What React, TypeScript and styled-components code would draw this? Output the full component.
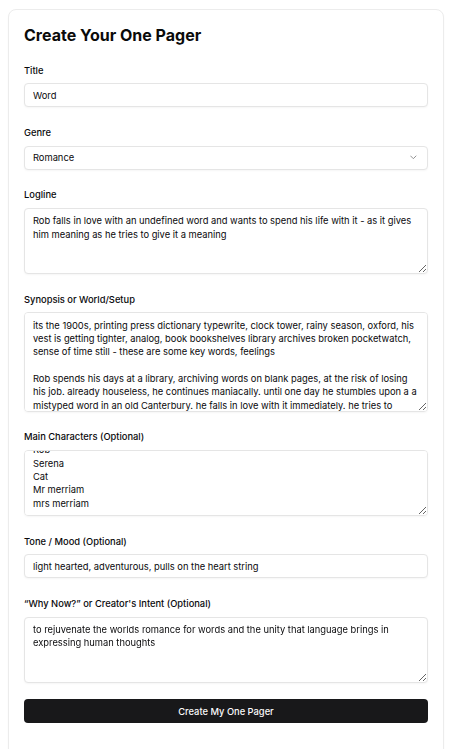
import React, { useEffect, useRef } from "react";
import styled, { createGlobalStyle } from "styled-components";
import { ChevronDown } from "lucide-react";

const Global = createGlobalStyle`
  html, body { margin: 0; padding: 0; background: #ffffff; }
  body {
    font-family: Inter, "Noto Sans", "Liberation Sans", sans-serif;
    color: #0a0a0a;
    -webkit-font-smoothing: antialiased;
  }
  * { box-sizing: border-box; }
`;

const Page = styled.div`
  padding: 9px 11px 0 8px;
`;

const Card = styled.div`
  width: 436px;
  border: 1px solid #ececec;
  border-radius: 8px;
  background: #ffffff;
  box-shadow: 0 1px 2px rgba(0, 0, 0, 0.03);
  padding: 15px 15px 48px 15px;
`;

const Heading = styled.h1`
  margin: 0 0 17.5px 0;
  font-size: 16px;
  line-height: 21.33px;
  font-weight: 700;
  color: #0a0a0a;
`;

const Form = styled.form`
  display: flex;
  flex-direction: column;
  gap: 18.67px;
`;

const Field = styled.div`
  display: flex;
  flex-direction: column;
  gap: 6.33px;
`;

const Label = styled.label`
  font-size: 9.33px;
  line-height: 13.33px;
  font-weight: 500;
  color: #09090b;
`;

const Input = styled.input`
  height: 24px;
  width: 100%;
  border: 1px solid #e5e5e5;
  border-radius: 4px;
  padding: 0 8px;
  font-family: inherit;
  font-size: 9.33px;
  color: #09090b;
  background: #ffffff;
  box-shadow: 0 1px 2px rgba(0, 0, 0, 0.04);
  outline: none;
`;

const SelectButton = styled.button`
  height: 24px;
  width: 100%;
  border: 1px solid #e5e5e5;
  border-radius: 4px;
  padding: 0 8px;
  display: flex;
  align-items: center;
  justify-content: space-between;
  font-family: inherit;
  font-size: 9.33px;
  color: #09090b;
  background: #ffffff;
  box-shadow: 0 1px 2px rgba(0, 0, 0, 0.04);
  cursor: pointer;
  svg { opacity: 0.5; }
`;

const TextArea = styled.textarea<{ $h: number }>`
  height: ${(p) => p.$h}px;
  width: 100%;
  border: 1px solid #e5e5e5;
  border-radius: 4px;
  padding: 5.33px 8px;
  font-family: inherit;
  font-size: 9.33px;
  line-height: 13.33px;
  color: #09090b;
  background: #ffffff;
  box-shadow: 0 1px 2px rgba(0, 0, 0, 0.04);
  outline: none;
  resize: vertical;
  display: block;
  scrollbar-width: none;
`;

const Submit = styled.button`
  margin-top: 16.33px;
  width: 100%;
  height: 24px;
  border: none;
  border-radius: 4px;
  background: #18181a;
  color: #fafafa;
  font-family: inherit;
  font-size: 9.33px;
  font-weight: 500;
  cursor: pointer;
`;

const synopsis =
  "its the 1900s, printing press dictionary typewrite, clock tower, rainy season, oxford, his vest is getting tighter, analog, book bookshelves library archives broken pocketwatch, sense of time still - these are some key words, feelings\n\nRob spends his days at a library, archiving words on blank pages, at the risk of losing his job. already houseless, he continues maniacally. until one day he stumbles upon a a mistyped word in an old Canterbury. he falls in love with it immediately. he tries to understand its meaning in every dictionary he can find, but the word has none.";

export default function App() {
  const charsRef = useRef<HTMLTextAreaElement>(null);
  useEffect(() => {
    if (charsRef.current) charsRef.current.scrollTop = charsRef.current.scrollHeight;
  }, []);

  return (
    <Page>
      <Global />
      <Card>
        <Heading>Create Your One Pager</Heading>
        <Form onSubmit={(e) => e.preventDefault()}>
          <Field>
            <Label>Title</Label>
            <Input defaultValue="Word" spellCheck={false} />
          </Field>
          <Field>
            <Label>Genre</Label>
            <SelectButton type="button">
              <span>Romance</span>
              <ChevronDown size={10.67} strokeWidth={2} />
            </SelectButton>
          </Field>
          <Field>
            <Label>Logline</Label>
            <TextArea
              $h={66}
              spellCheck={false}
              defaultValue="Rob falls in love with an undefined word and wants to spend his life with it - as it gives him meaning as he tries to give it a meaning"
            />
          </Field>
          <Field>
            <Label>Synopsis or World/Setup</Label>
            <TextArea $h={99.33} spellCheck={false} defaultValue={synopsis} />
          </Field>
          <Field>
            <Label>Main Characters (Optional)</Label>
            <TextArea
              ref={charsRef}
              $h={66}
              spellCheck={false}
              defaultValue={"Rob\nSerena\nCat\nMr merriam\nmrs merriam"}
            />
          </Field>
          <Field>
            <Label>Tone / Mood (Optional)</Label>
            <Input defaultValue="light hearted, adventurous, pulls on the heart string" spellCheck={false} />
          </Field>
          <Field>
            <Label>“Why Now?” or Creator's Intent (Optional)</Label>
            <TextArea
              $h={66}
              spellCheck={false}
              defaultValue="to rejuvenate the worlds romance for words and the unity that language brings in expressing human thoughts"
            />
          </Field>
        </Form>
        <Submit type="button">Create My One Pager</Submit>
      </Card>
    </Page>
  );
}
